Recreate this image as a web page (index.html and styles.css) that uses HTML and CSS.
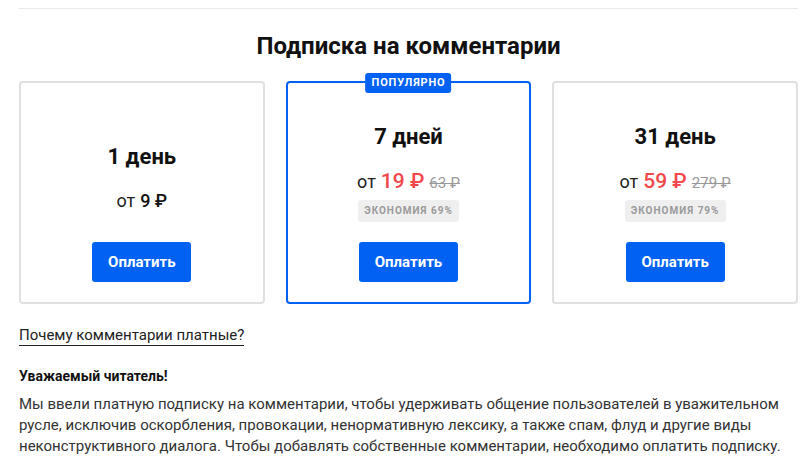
FILE: index.html
```html
<!DOCTYPE html>
<html lang="ru">
<head>
<meta charset="utf-8">
<title>Подписка на комментарии</title>
<link rel="stylesheet" href="styles.css">
</head>
<body>
<div class="page">
  <div class="rule"></div>
  <h2 class="title">Подписка на комментарии</h2>
  <div class="plans">
    <div class="plan">
      <div class="plan-info">
        <div class="plan-name">1 день</div>
        <div class="plan-price"><span class="from">от</span> <span class="amount">9 ₽</span></div>
      </div>
      <button class="pay">Оплатить</button>
    </div>
    <div class="plan plan-popular">
      <span class="badge">ПОПУЛЯРНО</span>
      <div class="plan-info">
        <div class="plan-name">7 дней</div>
        <div class="plan-price"><span class="from">от</span> <span class="amount sale">19 ₽</span> <s class="old">63 ₽</s></div>
        <div class="saving">ЭКОНОМИЯ 69%</div>
      </div>
      <button class="pay">Оплатить</button>
    </div>
    <div class="plan">
      <div class="plan-info">
        <div class="plan-name">31 день</div>
        <div class="plan-price"><span class="from">от</span> <span class="amount sale">59 ₽</span> <s class="old">279 ₽</s></div>
        <div class="saving">ЭКОНОМИЯ 79%</div>
      </div>
      <button class="pay">Оплатить</button>
    </div>
  </div>
  <a class="why" href="#">Почему комментарии платные?</a>
  <p class="lead">Уважаемый читатель!</p>
  <p class="text">Мы ввели платную подписку на комментарии, чтобы удерживать общение пользователей в уважительном русле, исключив оскорбления, провокации, ненормативную лексику, а также спам, флуд и другие виды неконструктивного диалога. Чтобы добавлять собственные комментарии, необходимо оплатить подписку.</p>
</div>
</body>
</html>
```

FILE: styles.css
```css
* { box-sizing: border-box; }
html, body { margin: 0; padding: 0; background: #fff; }
body {
  font-family: Roboto, "Liberation Sans", Arial, sans-serif;
  color: #222;
}
.page {
  width: 779px;
  margin-left: 19px;
  padding-top: 8px;
}
.rule {
  height: 1px;
  background: #e9e9e9;
}
.title {
  margin: 24px 0 0;
  text-align: center;
  font-size: 24px;
  line-height: 26px;
  font-weight: 700;
  color: #111;
}
.plans {
  display: grid;
  grid-template-columns: repeat(3, 1fr);
  gap: 21px;
  margin-top: 22px;
}
.plan {
  position: relative;
  height: 223px;
  border: 2px solid #e0e0e0;
  border-radius: 4px;
  display: flex;
  flex-direction: column;
  align-items: center;
  padding: 0 0 20px;
}
.plan-popular {
  border-color: #0061f2;
}
.badge {
  position: absolute;
  top: -10px;
  left: 50%;
  transform: translateX(-50%);
  background: #0061f2;
  color: #fff;
  font-size: 11px;
  font-weight: 700;
  letter-spacing: 0.8px;
  line-height: 20px;
  height: 20px;
  padding: 0 6px;
  border-radius: 3px;
}
.plan-info {
  flex: 1;
  display: flex;
  flex-direction: column;
  align-items: center;
  justify-content: center;
  padding-top: 32px;
}
.plan-name {
  font-size: 22px;
  font-weight: 700;
  line-height: 26px;
  color: #111;
}
.plan-price {
  margin-top: 18px;
  line-height: 26px;
  display: flex;
  align-items: baseline;
  gap: 5px;
}
.from {
  font-size: 18px;
  color: #222;
}
.amount {
  font-size: 18px;
  font-weight: 500;
  color: #111;
}
.amount.sale {
  font-size: 21px;
  color: #f2474b;
}
.old {
  font-size: 15px;
  color: #999;
}
.saving {
  margin: 4px 0 12px;
  background: #efefef;
  color: #9a9a9a;
  font-size: 10px;
  font-weight: 700;
  letter-spacing: 1px;
  height: 22px;
  line-height: 22px;
  padding: 0 6px;
  border-radius: 3px;
}
.pay {
  width: 99px;
  height: 40px;
  border: 0;
  border-radius: 3px;
  background: #0061f2;
  color: #fff;
  font-family: inherit;
  font-size: 15px;
  font-weight: 700;
}
.why {
  display: inline-block;
  margin-top: 21px;
  font-size: 15px;
  line-height: 20px;
  color: #222;
  text-decoration: none;
  border-bottom: 1px solid #222;
}
.lead {
  margin: 20px 0 0;
  font-size: 14px;
  font-weight: 700;
  line-height: 20px;
  color: #111;
}
.text {
  margin: 8px 0 0;
  font-size: 15px;
  line-height: 21px;
  color: #333;
}
```
